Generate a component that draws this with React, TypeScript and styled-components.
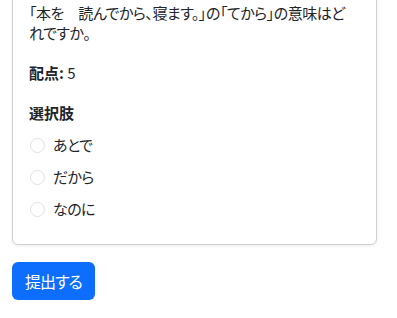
import styled, { createGlobalStyle } from "styled-components";

const GlobalStyle = createGlobalStyle`
  body {
    margin: 0;
    background: #fff;
    color: #212529;
    font-family: "Noto Sans CJK JP", "Noto Sans", sans-serif;
    font-feature-settings: "palt";
  }
`;

const choices = ["あとで", "だから", "なのに"];

const App = () => {
  return (
    <Page>
      <GlobalStyle />
      <Card>
        <Question>「本を　読んでから、寝ます。」の「てから」の意味はどれですか。</Question>
        <Score>
          <strong>配点:</strong> 5
        </Score>
        <ChoiceTitle>選択肢</ChoiceTitle>
        <ChoiceList>
          {choices.map((c) => (
            <Choice key={c}>
              <Radio type="radio" name="answer" />
              <span>{c}</span>
            </Choice>
          ))}
        </ChoiceList>
      </Card>
      <SubmitButton>提出する</SubmitButton>
    </Page>
  );
};

export default App;

const Page = styled.div`
  width: 365px;
  margin: -18px 0 0 12px;
`;

const Card = styled.div`
  border: 1px solid #d0d0d0;
  border-radius: 6px;
  box-shadow: 0 1px 3px rgba(0, 0, 0, 0.08);
  padding: 20px 24px 25px 16px;
  box-sizing: border-box;
`;

const Question = styled.p`
  margin: 0 0 20px;
  font-size: 15px;
  line-height: 20px;
  letter-spacing: -0.5px;
`;

const Score = styled.p`
  margin: 0 0 20px;
  font-size: 15px;
  line-height: 20px;
  strong {
    font-weight: 700;
  }
`;

const ChoiceTitle = styled.div`
  font-size: 15px;
  font-weight: 700;
  line-height: 20px;
  margin-bottom: 12px;
`;

const ChoiceList = styled.div`
  display: flex;
  flex-direction: column;
  gap: 12px;
`;

const Choice = styled.label`
  display: flex;
  align-items: center;
  gap: 8px;
  font-size: 15px;
  line-height: 20px;
  letter-spacing: -0.6px;
`;

const Radio = styled.input`
  appearance: none;
  width: 15px;
  height: 15px;
  margin: 0 0 0 1px;
  border: 1px solid #dee2e6;
  border-radius: 50%;
  background: #fff;
`;

const SubmitButton = styled.button`
  display: block;
  margin-top: 17px;
  height: 38px;
  padding: 0 13px;
  border: none;
  border-radius: 6px;
  background: #0d6efd;
  color: #fff;
  font-family: inherit;
  font-feature-settings: "palt";
  font-size: 16px;
  letter-spacing: -1px;
`;
